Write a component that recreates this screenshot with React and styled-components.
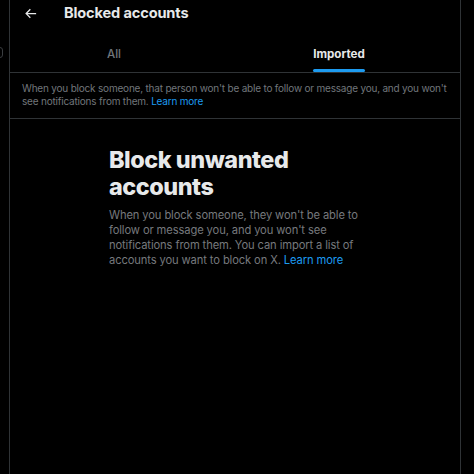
import React from "react";
import styled, { createGlobalStyle } from "styled-components";

const Global = createGlobalStyle`
  html, body { margin: 0; padding: 0; background: #000; }
  body { font-family: Inter, "Liberation Sans", Arial, sans-serif; -webkit-font-smoothing: antialiased; }
  * { box-sizing: border-box; }
`;

const Page = styled.div`
  display: flex;
  width: 474px;
  height: 474px;
  overflow: hidden;
  background: #000;
`;

const Gutter = styled.div`
  width: 9px;
  flex: none;
  display: flex;
  flex-direction: column;
`;

const GutterChip = styled.div`
  margin-top: 47px;
  margin-left: -6px;
  width: 9px;
  height: 11px;
  border: 1px solid #3a3d40;
  border-radius: 3px;
`;

const Column = styled.main`
  width: 452px;
  flex: none;
  border-left: 1px solid #2f3336;
  border-right: 1px solid #2f3336;
  display: flex;
  flex-direction: column;
`;

const Header = styled.header`
  height: 26px;
  display: flex;
  align-items: center;
  padding-left: 13px;
  gap: 26px;
  color: #e7e9ea;
`;

const BackButton = styled.button`
  background: none;
  border: 0;
  padding: 0;
  width: 15px;
  height: 15px;
  color: #e7e9ea;
  display: flex;
  svg { width: 15px; height: 15px; fill: currentColor; }
`;

const Title = styled.h2`
  margin: 0;
  font-size: 14.6px;
  font-weight: 700;
  letter-spacing: -0.15px;
  line-height: 20px;
`;

const TabRow = styled.nav`
  display: grid;
  grid-template-columns: 1fr 1fr;
  border-bottom: 1px solid #2f3336;
`;

const Tab = styled.div`
  display: flex;
  justify-content: center;
  padding-right: 17px;
`;

const TabInner = styled.div`
  display: flex;
  flex-direction: column;
  align-items: stretch;
  padding-top: 20px;
`;

const TabLabel = styled.span`
  font-size: 11.6px;
  line-height: 16px;
  font-weight: ${(p) => (p.$active ? 700 : 500)};
  color: ${(p) => (p.$active ? "#e7e9ea" : "#71767b")};
  white-space: nowrap;
`;

const Indicator = styled.div`
  margin-top: 7px;
  height: 3px;
  border-radius: 2px;
  background: ${(p) => (p.$active ? "#1d9bf0" : "transparent")};
`;

const Info = styled.p`
  margin: 0;
  padding: 9px 4px 11px 12px;
  font-size: 10px;
  letter-spacing: -0.2px;
  line-height: 12.5px;
  color: #71767b;
  border-bottom: 1px solid #2f3336;
`;

const Link = styled.a`
  color: #1d9bf0;
  text-decoration: none;
`;

const Empty = styled.section`
  padding: 27px 0 0 99px;
  width: 360px;
`;

const EmptyTitle = styled.h1`
  margin: 0;
  font-size: 23.4px;
  line-height: 27px;
  font-weight: 800;
  letter-spacing: -0.45px;
  color: #e7e9ea;
`;

const EmptyText = styled.p`
  margin: 7.5px 0 0;
  font-size: 11.2px;
  letter-spacing: -0.12px;
  line-height: 15.3px;
  color: #76797d;
`;

export default function App() {
  return (
    <>
      <Global />
      <Page>
        <Gutter>
          <GutterChip />
        </Gutter>
        <Column>
          <Header>
            <BackButton aria-label="Back">
              <svg viewBox="0 0 24 24">
                <path d="M7.414 13l5.043 5.04-1.414 1.42L3.586 12l7.457-7.46 1.414 1.42L7.414 11H21v2H7.414z" />
              </svg>
            </BackButton>
            <Title>Blocked accounts</Title>
          </Header>
          <TabRow>
            <Tab>
              <TabInner>
                <TabLabel>All</TabLabel>
                <Indicator />
              </TabInner>
            </Tab>
            <Tab>
              <TabInner>
                <TabLabel $active>Imported</TabLabel>
                <Indicator $active />
              </TabInner>
            </Tab>
          </TabRow>
          <Info>
            When you block someone, that person won't be able to follow or message you, and you won't
            see notifications from them. <Link href="#">Learn more</Link>
          </Info>
          <Empty>
            <EmptyTitle>Block unwanted accounts</EmptyTitle>
            <EmptyText>
              When you block someone, they won't be able to follow or message you, and you won't see
              notifications from them. You can import a list of accounts you want to block on X.{" "}
              <Link href="#">Learn more</Link>
            </EmptyText>
          </Empty>
        </Column>
      </Page>
    </>
  );
}
